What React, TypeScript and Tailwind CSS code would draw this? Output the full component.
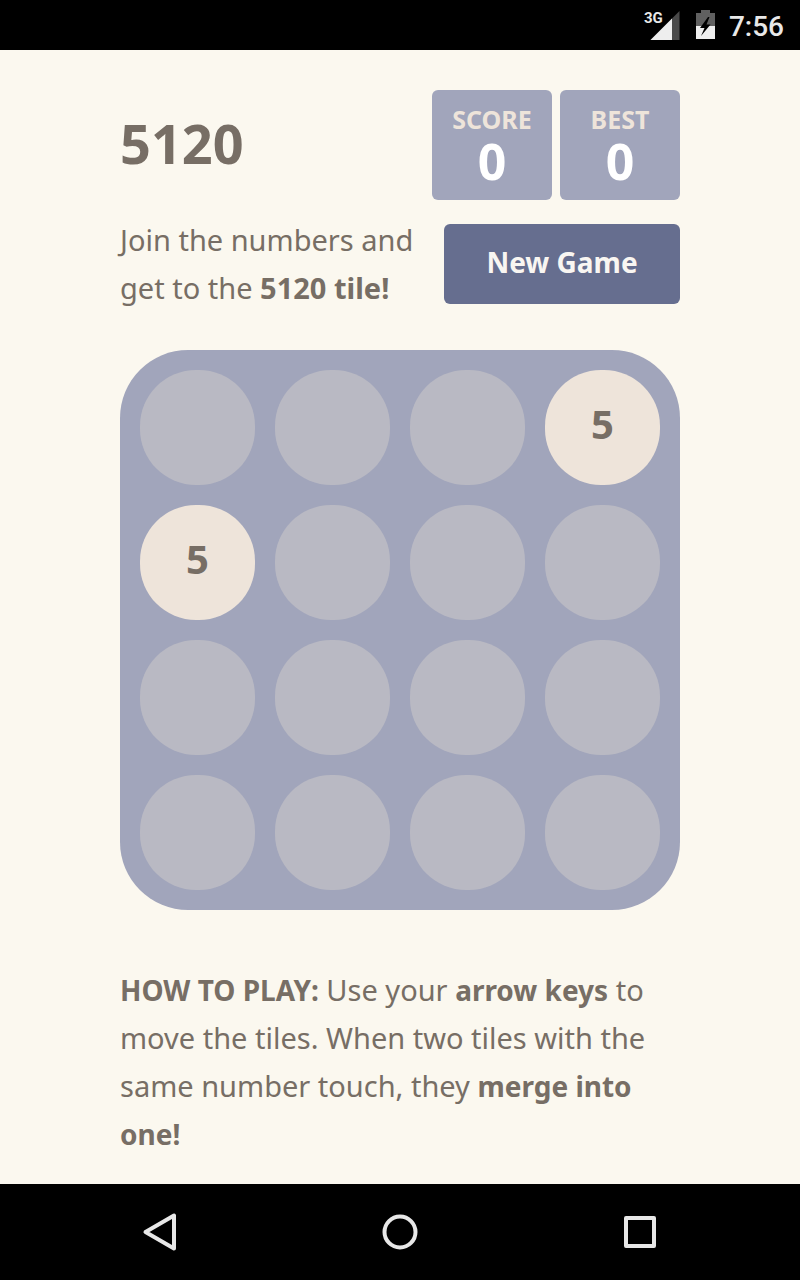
const board: number[][] = [
  [0, 0, 0, 5],
  [5, 0, 0, 0],
  [0, 0, 0, 0],
  [0, 0, 0, 0],
];

function StatusBar() {
  return (
    <header className="flex h-[50px] items-center justify-end bg-black pr-4 font-['Roboto',sans-serif] text-[#e8e8e8]">
      <div className="relative flex h-8 w-9 items-center">
        <svg viewBox="0 0 36 32" className="h-8 w-9" aria-hidden="true">
          <path d="M35.500 2V31H6.500Z" fill="#4a4a4a" />
          <path d="M28 9.500V31H6.500Z" fill="#eeeeee" />
        </svg>
        <span className="absolute top-0 left-0 text-[15px] leading-[18px] font-bold">3G</span>
      </div>
      <svg viewBox="0 0 19 32" className="ml-4 h-8 w-[19px]" aria-label="Battery charging">
        <path d="M5 1H14V4H19V17H0V4H5Z" fill="#606060" />
        <path d="M0 17H19V30H0Z" fill="#eeeeee" />
        <path d="M12 8L4 19H8.500L5 27L14.500 15.500H10.500L13.500 8Z" fill="#000000" />
      </svg>
      <time className="ml-[14px] pt-1 text-[28px] leading-8 font-medium">7:56</time>
    </header>
  );
}

function ScoreBox({ label, value }: { label: string; value: number }) {
  return (
    <div className="flex h-[110px] w-[120px] flex-col items-center rounded-[6px] bg-[#a1a5bb] pt-[13px]">
      <span className="text-[25px] leading-8 font-bold text-[#eee4da]">{label}</span>
      <span className="text-[50px] leading-[52px] font-bold text-white">{value}</span>
    </div>
  );
}

function NavigationBar() {
  return (
    <nav className="bg-black text-[#e8e8e8]">
      <div className="mx-auto grid h-24 max-w-[720px] grid-cols-3 place-items-center">
        <button type="button" aria-label="Back">
          <svg viewBox="0 0 48 48" className="h-12 w-12" fill="none" stroke="currentColor" strokeWidth="4" strokeLinejoin="round">
            <path d="M9.500 24L38 7.500V40.500Z" />
          </svg>
        </button>
        <button type="button" aria-label="Home">
          <svg viewBox="0 0 48 48" className="h-12 w-12" fill="none" stroke="currentColor" strokeWidth="4">
            <circle cx="24" cy="24" r="15.500" />
          </svg>
        </button>
        <button type="button" aria-label="Recent apps">
          <svg viewBox="0 0 48 48" className="h-12 w-12" fill="none" stroke="currentColor" strokeWidth="4" strokeLinejoin="round">
            <rect x="10" y="10" width="28" height="28" />
          </svg>
        </button>
      </div>
    </nav>
  );
}

export default function App() {
  return (
    <div className="flex min-h-screen flex-col bg-[#fbf8ef] font-['Noto_Sans',sans-serif] text-[#776e65]">
      <StatusBar />
      <main className="mx-auto w-full max-w-[560px] flex-1 pt-10">
        <div className="flex items-center justify-between">
          <h1 className="pb-1 text-[54px] leading-[56px] font-bold">5120</h1>
          <div className="flex gap-2">
            <ScoreBox label="SCORE" value={0} />
            <ScoreBox label="BEST" value={0} />
          </div>
        </div>
        <div className="flex items-center justify-between pt-4">
          <p className="text-[29px] leading-[48px]">
            Join the numbers and
            <br />
            get to the <strong>5120 tile!</strong>
          </p>
          <button
            type="button"
            className="h-20 w-[236px] rounded-[6px] bg-[#666e8f] pb-1 text-[28px] font-bold text-[#f9f6f2]"
          >
            New Game
          </button>
        </div>
        <div className="mt-[38px] grid grid-cols-4 gap-5 rounded-[68px] bg-[#a1a5bb] p-5">
          {board.flat().map((value, index) =>
            value ? (
              <div
                key={index}
                className="flex aspect-square items-center justify-center rounded-[56px] bg-[#eee4da] pb-2 text-[40px] font-bold"
              >
                {value}
              </div>
            ) : (
              <div key={index} className="aspect-square rounded-[56px] bg-[#b9b9c3]" />
            ),
          )}
        </div>
        <p className="pt-14 text-[29px] leading-[48px]">
          <strong className="text-[28px]">HOW TO PLAY:</strong> Use your{" "}
          <strong className="text-[28px]">arrow keys</strong> to move the tiles. When two tiles with the same number
          touch, they <strong className="text-[28px]">merge into one!</strong>
        </p>
      </main>
      <NavigationBar />
    </div>
  );
}
